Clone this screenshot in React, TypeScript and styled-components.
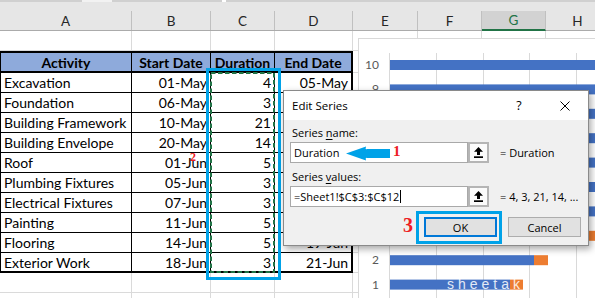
import styled, { createGlobalStyle } from 'styled-components';

const GlobalStyle = createGlobalStyle`
  html, body {
    margin: 0;
    padding: 0;
    background: #ffffff;
  }
  #root {
    width: 595px;
    height: 298px;
    overflow: hidden;
  }
`;

type Task = { name: string; start: string; days: number; end: string };

const tasks: Task[] = [
  { name: 'Excavation', start: '01-May', days: 4, end: '05-May' },
  { name: 'Foundation', start: '06-May', days: 3, end: '09-May' },
  { name: 'Building Framework', start: '10-May', days: 21, end: '31-May' },
  { name: 'Building Envelope', start: '20-May', days: 14, end: '03-Jun' },
  { name: 'Roof', start: '01-Jun', days: 5, end: '06-Jun' },
  { name: 'Plumbing Fixtures', start: '05-Jun', days: 3, end: '08-Jun' },
  { name: 'Electrical Fixtures', start: '07-Jun', days: 3, end: '10-Jun' },
  { name: 'Painting', start: '11-Jun', days: 5, end: '16-Jun' },
  { name: 'Flooring', start: '14-Jun', days: 5, end: '19-Jun' },
  { name: 'Exterior Work', start: '18-Jun', days: 3, end: '21-Jun' },
];

const columns = [
  { label: 'A', width: 132 },
  { label: 'B', width: 79 },
  { label: 'C', width: 64 },
  { label: 'D', width: 78 },
  { label: 'E', width: 65 },
  { label: 'F', width: 64 },
  { label: 'G', width: 64, selected: true },
  { label: 'H', width: 64 },
];

// chart bars, x positions relative to the chart box
const bars = [
  { n: 10, blue: 340, orange: 0 },
  { n: 9, blue: 340, orange: 0 },
  { n: 8, blue: 340, orange: 0 },
  { n: 7, blue: 340, orange: 0 },
  { n: 6, blue: 340, orange: 0 },
  { n: 5, blue: 340, orange: 0 },
  { n: 4, blue: 340, orange: 0 },
  { n: 3, blue: 222, orange: 30 },
  { n: 2, blue: 175, orange: 14 },
  { n: 1, blue: 151, orange: 13 },
];

const gridX = [30, 77, 124, 170, 217];

type Line = 'grid' | 'thin' | 'thick' | 'none';

const line = (l: Line = 'grid') =>
  l === 'none'
    ? 'none'
    : l === 'thick'
    ? '2px solid #000'
    : l === 'thin'
    ? '1px solid #000'
    : '1px solid #dadada';

const App = () => {
  const emptyRow = (key: string) => columns.map(c => <Cell key={key + c.label} />);

  return (
    <Page>
      <GlobalStyle />
      <TopStrip>
        <EdgeSegment $w={82} />
        <EdgeSegment $w={30} $light />
        <EdgeSegment $w={110} />
        <EdgeSegment $w={4} $white />
        <EdgeSegment $w={369} />
      </TopStrip>
      <ColHeaderRow>
        {columns.map(c => (
          <ColHead key={c.label} $w={c.width} $selected={c.selected}>
            {c.label}
          </ColHead>
        ))}
      </ColHeaderRow>

      <Sheet>
        {emptyRow('r1')}

        <Cell $head $top="thick" $bottom="thick" $right="thin" $left="thin" $align="center">
          Activity
        </Cell>
        <Cell $head $top="thick" $bottom="thick" $right="thin" $align="center">
          Start Date
        </Cell>
        <Cell $head $top="thick" $bottom="thick" $right="thin" $align="center">
          Duration
        </Cell>
        <Cell $head $top="thick" $bottom="thick" $right="thick" $align="center">
          End Date
        </Cell>
        <Cell />
        <Cell />
        <Cell />
        <Cell />

        {tasks.map((t, i) => {
          const bottom: Line = i === tasks.length - 1 ? 'thick' : 'thin';
          return [
            <Cell key={t.name + 'a'} $bottom={bottom} $right="thin" $left="thin">
              {t.name}
            </Cell>,
            <Cell key={t.name + 'b'} $bottom={bottom} $right="thin" $align="right">
              {t.start}
            </Cell>,
            <Cell key={t.name + 'c'} $bottom={bottom} $right="thin" $align="right">
              {t.days}
            </Cell>,
            <Cell key={t.name + 'd'} $bottom={bottom} $right="thick" $align="right">
              {t.end}
            </Cell>,
            <Cell key={t.name + 'e'} />,
            <Cell key={t.name + 'f'} />,
            <Cell key={t.name + 'g'} />,
            <Cell key={t.name + 'h'} />,
          ];
        })}

        {emptyRow('r13')}
        {emptyRow('r14')}
      </Sheet>

      <Marquee viewBox="0 0 65 201" width={65} height={201}>
        <rect
          x={1}
          y={1}
          width={63}
          height={199}
          fill="none"
          stroke="#217346"
          strokeWidth={2}
          strokeDasharray="4.5 2.5"
        />
      </Marquee>
      <SelectionBox />

      <Chart>
        <svg width={250} height={262}>
          {gridX.map(x => (
            <line key={x} x1={x + 0.5} x2={x + 0.5} y1={14} y2={262} stroke="#d9d9d9" strokeWidth={1} />
          ))}
          {bars.map(b => {
            const cy = 26 + (10 - b.n) * 24.4;
            return (
              <g key={b.n}>
                <text
                  x={20}
                  y={cy + 4}
                  textAnchor="end"
                  fontFamily="Lato, 'Liberation Sans', sans-serif"
                  fontSize={12}
                  fill="#595959"
                >
                  {b.n}
                </text>
                <rect x={31} y={cy - 5} width={b.blue - 31} height={10} fill="#4472c4" />
                {b.orange > 0 && (
                  <rect x={b.blue} y={cy - 5} width={b.orange} height={10} fill="#ed7d31" />
                )}
              </g>
            );
          })}
          <text
            x={88}
            y={250}
            fontFamily="'Liberation Sans', sans-serif"
            fontWeight={400}
            fontSize={14}
            letterSpacing={4}
            fill="#ffffff"
            opacity={0.85}
          >
            sheetaki
          </text>
        </svg>
      </Chart>

      <Dialog>
        <TitleBar>
          <Title>Edit Series</Title>
          <TitleButton>?</TitleButton>
          <TitleButton>
            <svg width={10} height={10} viewBox="0 0 10 10">
              <path d="M0.5 0.5 L9.5 9.5 M9.5 0.5 L0.5 9.5" stroke="#000" strokeWidth={1} />
            </svg>
          </TitleButton>
        </TitleBar>
        <DialogBody>
          <FieldLabel>
            Series <u>n</u>ame:
          </FieldLabel>
          <FieldRow>
            <RefInput>Duration</RefInput>
            <RefButton>
              <CollapseIcon />
            </RefButton>
            <Preview>= Duration</Preview>
          </FieldRow>
          <FieldLabel $gap>
            Series <u>v</u>alues:
          </FieldLabel>
          <FieldRow>
            <RefInput>
              =Sheet1!$C$3:$C$12
              <Caret />
            </RefInput>
            <RefButton>
              <CollapseIcon />
            </RefButton>
            <Preview>= 4, 3, 21, 14, ...</Preview>
          </FieldRow>
          <ButtonRow>
            <DialogButton $primary>OK</DialogButton>
            <DialogButton>Cancel</DialogButton>
          </ButtonRow>
        </DialogBody>
      </Dialog>

      <CalloutArrow width={44} height={15} viewBox="0 0 44 15">
        <path d="M0 7.5 L20 0.5 Q19 4 21 3 L44 3 L44 12 L21 12 Q19 11 20 14.5 Z" fill="#00a2e8" />
      </CalloutArrow>
      <StepMark $x={393} $y={144} $size={15}>
        1
      </StepMark>
      <StepMark $x={190} $y={151} $size={12}>
        2
      </StepMark>
      <StepMark $x={403} $y={215} $size={20}>
        3
      </StepMark>
      <OkHighlight />
    </Page>
  );
};

const CollapseIcon = () => (
  <svg width={9} height={11} viewBox="0 0 9 11">
    <path d="M4.5 0 L9 4.8 L6 4.8 L6 8 L3 8 L3 4.8 L0 4.8 Z" fill="#000" />
    <rect x={0} y={9.3} width={9} height={1.7} fill="#000" />
  </svg>
);

export default App;

const Page = styled.div`
  position: relative;
  width: 595px;
  height: 298px;
  overflow: hidden;
  background: #ffffff;
  font-family: Lato, 'Liberation Sans', sans-serif;
`;

const TopStrip = styled.div`
  display: flex;
  height: 11px;
  background: #e6e6e6;
  align-items: flex-start;
`;

const EdgeSegment = styled.div<{ $w: number; $light?: boolean; $white?: boolean }>`
  flex: none;
  width: ${({ $w }) => $w}px;
  height: 2px;
  background: ${({ $light, $white }) => ($white ? '#ffffff' : $light ? '#f2f2f2' : '#d0d0d0')};
`;

const ColHeaderRow = styled.div`
  display: flex;
  height: 20px;
  width: 620px;
  background: #e6e6e6;
  border-bottom: 1px solid #ababab;
  box-sizing: border-box;
`;

const ColHead = styled.div<{ $w: number; $selected?: boolean }>`
  flex: none;
  width: ${({ $w }) => $w}px;
  box-sizing: border-box;
  display: flex;
  align-items: center;
  justify-content: center;
  border-right: 1px solid #c0c0c0;
  font-size: 13.5px;
  color: ${({ $selected }) => ($selected ? '#217346' : '#262626')};
  background: ${({ $selected }) => ($selected ? '#d2d2d2' : 'transparent')};
  border-bottom: ${({ $selected }) => ($selected ? '2px solid #217346' : 'none')};
  margin-bottom: ${({ $selected }) => ($selected ? '-1px' : '0')};
`;

const Sheet = styled.div`
  display: grid;
  grid-template-columns: 132px 79px 64px 78px 65px 64px 64px 64px;
  grid-template-rows: 20px 22px;
  grid-auto-rows: 20px;
  width: 620px;
`;

const Cell = styled.div<{
  $head?: boolean;
  $align?: 'left' | 'right' | 'center';
  $top?: Line;
  $right?: Line;
  $bottom?: Line;
  $left?: Line;
}>`
  box-sizing: border-box;
  display: flex;
  align-items: center;
  justify-content: ${({ $align }) =>
    $align === 'right' ? 'flex-end' : $align === 'center' ? 'center' : 'flex-start'};
  padding: 0 3px;
  overflow: hidden;
  white-space: nowrap;
  font-size: 14px;
  color: #000;
  font-weight: ${({ $head }) => ($head ? 700 : 400)};
  background: ${({ $head }) => ($head ? '#8eaadb' : '#ffffff')};
  border-top: ${({ $top }) => ($top ? line($top) : 'none')};
  border-right: ${({ $right }) => line($right)};
  border-bottom: ${({ $bottom }) => line($bottom)};
  border-left: ${({ $left }) => ($left ? line($left) : 'none')};
`;

const Marquee = styled.svg`
  position: absolute;
  left: 210px;
  top: 72px;
`;

const SelectionBox = styled.div`
  position: absolute;
  left: 206px;
  top: 68px;
  width: 75px;
  height: 212px;
  box-sizing: border-box;
  border: 3px solid #00a2e8;
`;

const Chart = styled.div`
  position: absolute;
  left: 358px;
  top: 38px;
  width: 260px;
  height: 280px;
  background: #ffffff;
  border: 1px solid #d9d9d9;
`;

const Dialog = styled.div`
  position: absolute;
  left: 283px;
  top: 90px;
  width: 306px;
  height: 156px;
  box-sizing: border-box;
  display: flex;
  flex-direction: column;
  border: 1px solid #8a8a8a;
  background: #f0f0f0;
  box-shadow: 2px 3px 7px rgba(0, 0, 0, 0.35);
  font-family: 'Open Sans', 'Noto Sans', sans-serif;
  font-size: 11px;
  color: #000;
`;

const TitleBar = styled.div`
  display: flex;
  align-items: center;
  height: 29px;
  background: #ffffff;
`;

const Title = styled.div`
  flex: 1;
  padding-left: 8px;
  font-size: 11.5px;
`;

const TitleButton = styled.div`
  width: 46px;
  height: 29px;
  display: flex;
  align-items: center;
  justify-content: center;
  font-size: 12.5px;
`;

const DialogBody = styled.div`
  flex: 1;
  display: flex;
  flex-direction: column;
  padding: 5px 7px 0 6px;
`;

const FieldLabel = styled.div<{ $gap?: boolean }>`
  height: 16px;
  line-height: 16px;
  padding-left: 2px;
  margin-top: ${({ $gap }) => ($gap ? '6px' : '0')};

  & u {
    text-decoration-thickness: 1px;
    text-underline-offset: 2px;
  }
`;

const FieldRow = styled.div`
  display: flex;
  align-items: center;
  margin-top: 1px;
`;

const RefInput = styled.div`
  width: 178px;
  height: 21px;
  box-sizing: border-box;
  display: flex;
  align-items: center;
  padding-left: 3px;
  background: #ffffff;
  border: 1px solid #a9a9a9;
  white-space: nowrap;
`;

const Caret = styled.span`
  display: inline-block;
  width: 1px;
  height: 13px;
  margin-left: 1px;
  background: #000;
`;

const RefButton = styled.div`
  width: 21px;
  height: 21px;
  box-sizing: border-box;
  display: flex;
  align-items: center;
  justify-content: center;
  background: #fbfbfb;
  border: 2px solid #b5b5b5;
`;

const Preview = styled.div`
  margin-left: 11px;
  white-space: nowrap;
`;

const ButtonRow = styled.div`
  display: flex;
  justify-content: flex-end;
  gap: 11px;
  margin-top: 10px;
`;

const DialogButton = styled.div<{ $primary?: boolean }>`
  width: 73px;
  height: 20px;
  box-sizing: border-box;
  display: flex;
  align-items: center;
  justify-content: center;
  background: #e1e1e1;
  border: ${({ $primary }) => ($primary ? '2px solid #0078d7' : '1px solid #adadad')};
`;

const CalloutArrow = styled.svg`
  position: absolute;
  left: 346px;
  top: 146px;
`;

const StepMark = styled.div<{ $x: number; $y: number; $size: number }>`
  position: absolute;
  left: ${({ $x }) => $x}px;
  top: ${({ $y }) => $y}px;
  font-family: 'Liberation Serif', serif;
  font-weight: 700;
  font-size: ${({ $size }) => $size}px;
  line-height: 1;
  color: #ed1c24;
`;

const OkHighlight = styled.div`
  position: absolute;
  left: 416px;
  top: 211px;
  width: 86px;
  height: 33px;
  box-sizing: border-box;
  border: 3px solid #00a2e8;
`;
